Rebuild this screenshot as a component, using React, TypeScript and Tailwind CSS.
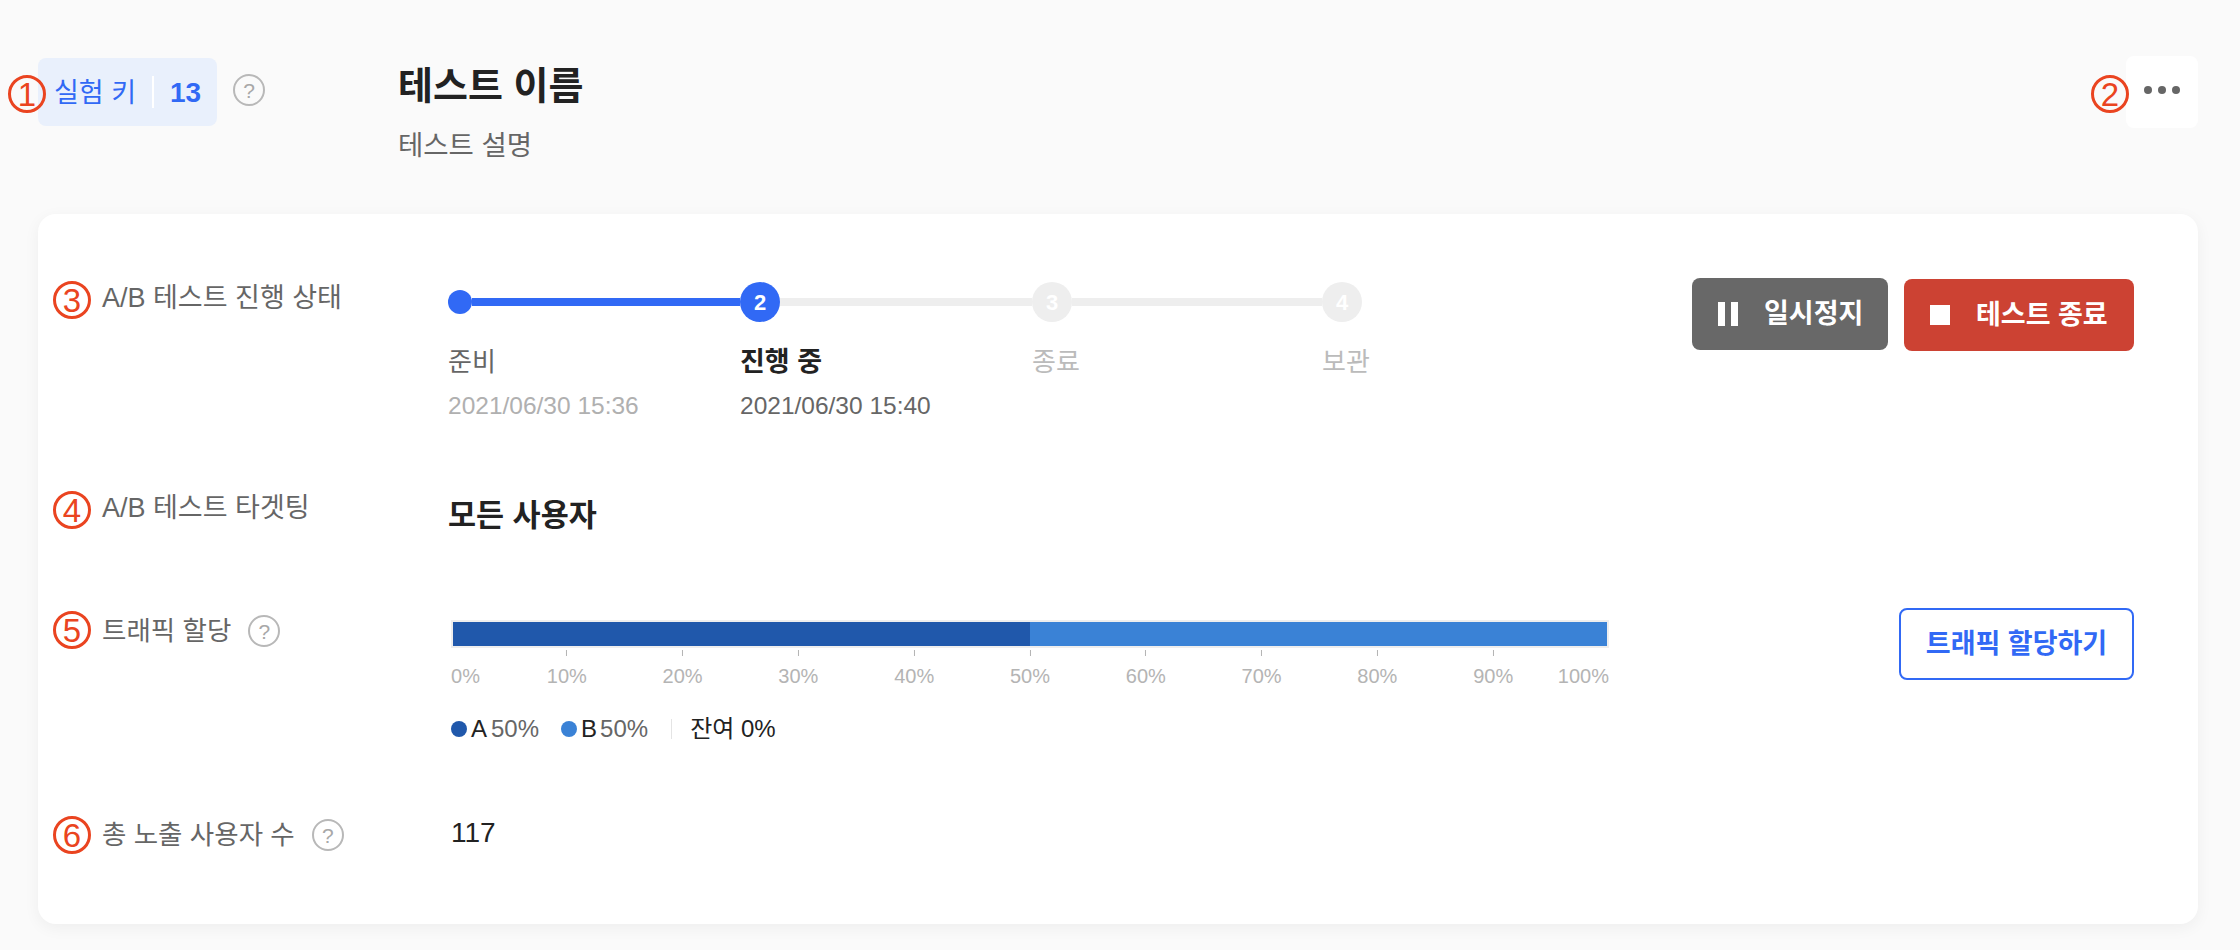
import React from "react";

function Num({ n, className }: { n: number; className: string }) {
  return (
    <span
      className={`absolute flex h-[38px] w-[38px] items-center justify-center rounded-full border-[3.5px] border-[#ea4420] text-[33px] leading-none text-[#ea4420] ${className}`}
    >
      {n}
    </span>
  );
}

function Help({ className = "" }: { className?: string }) {
  return (
    <span
      className={`flex h-[32px] w-[32px] shrink-0 items-center justify-center rounded-full border-2 border-[#b8b8b8] text-[21px] leading-none text-[#a8a8a8] ${className}`}
    >
      ?
    </span>
  );
}

function Label({ children, n, top, size = "text-[27px]" }: { children: React.ReactNode; n: number; top: string; size?: string }) {
  return (
    <div className={`relative flex h-[32px] items-center leading-[32px] text-[#666666] whitespace-nowrap ${size}`}>
      <Num n={n} className={`-left-[49px] ${top}`} />
      {children}
    </div>
  );
}

const steps = [
  { label: "준비", date: "2021/06/30 15:36" },
  { label: "진행 중", date: "2021/06/30 15:40" },
  { label: "종료", date: "" },
  { label: "보관", date: "" },
];

function Stepper() {
  return (
    <div className="flex">
      {steps.map((s, i) => (
        <div key={s.label} className={i === 3 ? "w-[60px]" : i === 2 ? "w-[290px]" : "w-[292px]"}>
          <div className="flex h-[40px] items-center">
            {i === 0 ? (
              <span className="h-[24px] w-[24px] shrink-0 rounded-full bg-[#3169f5]" />
            ) : (
              <span
                className={`flex h-[40px] w-[40px] shrink-0 items-center justify-center rounded-full text-[22px] font-bold text-white ${
                  i === 1 ? "bg-[#3169f5]" : "bg-[#eeeeee]"
                }`}
              >
                {i + 1}
              </span>
            )}
            {i < 3 && <span className={`h-[8px] flex-1 ${i === 0 ? "bg-[#3169f5]" : "bg-[#eeeeee]"}`} />}
          </div>
          <div
            className={`mt-[24px] h-[32px] leading-[32px] whitespace-nowrap ${
              i === 0
                ? "text-[26px] text-[#666666]"
                : i === 1
                  ? "text-[27px] font-bold text-[#222222]"
                  : "text-[26px] text-[#bbbbbb]"
            }`}
          >
            {s.label}
          </div>
          {s.date && (
            <div
              className={`mt-[12px] text-[24.5px] leading-[32px] whitespace-nowrap ${
                i === 0 ? "text-[#b0b0b0]" : "text-[#666666]"
              }`}
            >
              {s.date}
            </div>
          )}
        </div>
      ))}
    </div>
  );
}

const ticks = [0, 10, 20, 30, 40, 50, 60, 70, 80, 90, 100];

function Traffic() {
  return (
    <div className="mt-[6px] ml-[3px] w-[1158px]">
      <div className="flex h-[28px] border-2 border-[#eeeeee]">
        <div className="w-1/2 bg-[#2058ab]" />
        <div className="w-1/2 bg-[#3a82d6]" />
      </div>
      <div className="relative h-[37px] w-full">
        {ticks.map((t) => {
          const align = t === 0 ? "translateX(0)" : t === 100 ? "translateX(-100%)" : "translateX(-50%)";
          return (
            <div key={t} className="absolute top-[2px] flex flex-col items-center" style={{ left: `${t}%`, transform: align }}>
              <span className={`h-[6px] w-[1px] ${t === 0 || t === 100 ? "bg-transparent" : "bg-[#b4b4b4]"}`} />
              <span className="mt-[11px] text-[20px] leading-[18px] text-[#b4b4b4]">{t}%</span>
            </div>
          );
        })}
      </div>
      <div className="mt-[30px] flex h-[28px] items-center text-[24px] leading-[28px]">
        <span className="h-[16px] w-[16px] rounded-full bg-[#2058ab]" />
        <span className="ml-[4px] text-[#222222]">A</span>
        <span className="ml-[4px] text-[#666666]">50%</span>
        <span className="ml-[22px] h-[16px] w-[16px] rounded-full bg-[#3a82d6]" />
        <span className="ml-[4px] text-[#222222]">B</span>
        <span className="ml-[3px] text-[#666666]">50%</span>
        <span className="ml-[23px] h-[20px] w-[1px] bg-[#e4e4e4]" />
        <span className="ml-[18px] text-[#222222]">잔여 0%</span>
      </div>
    </div>
  );
}

export default function App() {
  return (
    <div className="h-[950px] w-full overflow-hidden bg-[#fafafa] pl-[38px] pr-[42px] pt-[56px] font-['Liberation_Sans','Noto_Sans_CJK_KR',sans-serif]">
      <header className="flex h-[158px] items-start">
        <div className="relative mt-[2px] flex h-[68px] w-[179px] items-center rounded-[8px] bg-[#e9f0fc] pl-[16px] text-[27px] leading-[32px] text-[#3169f5]">
          <Num n={1} className="-left-[30px] top-[17px]" />
          <span className="mt-[2px] w-[81px] whitespace-nowrap">실험 키</span>
          <span className="ml-[17px] h-[32px] w-[2px] bg-white" />
          <span className="ml-[16px] mt-[2px] text-[28px] font-bold">13</span>
        </div>
        <Help className="ml-[16px] mt-[18px]" />
        <div className="ml-[133px] mt-[8px]">
          <h1 className="text-[38px] font-bold leading-[44px] text-[#222222]">테스트 이름</h1>
          <p className="mt-[21px] text-[27.5px] leading-[34px] text-[#666666]">테스트 설명</p>
        </div>
        <button className="relative ml-auto flex h-[72px] w-[72px] items-center justify-center gap-[6px] rounded-[8px] bg-white pb-[4px]">
          <Num n={2} className="-left-[35px] top-[19px]" />
          <span className="h-[8px] w-[8px] rounded-full bg-[#666666]" />
          <span className="h-[8px] w-[8px] rounded-full bg-[#666666]" />
          <span className="h-[8px] w-[8px] rounded-full bg-[#666666]" />
        </button>
      </header>

      <main className="h-[710px] w-[2160px] rounded-[18px] bg-white px-[64px] pt-[68px] shadow-[0_4px_16px_rgba(0,0,0,0.05)]">
        <section className="flex h-[209px] items-start">
          <div className="w-[346px]">
            <Label n={3} top="top-[-1px]">A/B 테스트 진행 상태</Label>
          </div>
          <Stepper />
          <div className="-mt-[4px] ml-auto flex items-start gap-[16px]">
            <button className="flex h-[72px] w-[196px] items-center rounded-[8px] bg-[#686868] pl-[26px] text-[27px] font-bold text-white">
              <span className="h-[24px] w-[7px] bg-white" />
              <span className="ml-[6px] h-[24px] w-[7px] bg-white" />
              <span className="ml-[26px] whitespace-nowrap">일시정지</span>
            </button>
            <button className="mt-[1px] flex h-[72px] w-[230px] items-center rounded-[8px] bg-[#cc4233] pl-[26px] text-[27px] font-bold text-white">
              <span className="h-[20px] w-[20px] bg-white" />
              <span className="ml-[26px] whitespace-nowrap">테스트 종료</span>
            </button>
          </div>
        </section>

        <section className="flex h-[123px] items-start">
          <div className="mt-[1px] w-[346px]">
            <Label n={4} top="top-[-1px]">A/B 테스트 타겟팅</Label>
          </div>
          <div className="mt-[4px] text-[30.5px] font-bold leading-[40px] text-[#222222]">모든 사용자</div>
        </section>

        <section className="flex h-[205px] items-start">
          <div className="mt-[1px] w-[346px]">
            <Label n={5} top="top-[-4px]" size="text-[26.5px]">
              트래픽 할당
              <Help className="ml-[17px]" />
            </Label>
          </div>
          <Traffic />
          <button className="-mt-[6px] ml-auto h-[72px] w-[235px] rounded-[8px] border-2 border-[#3169f5] bg-white text-[27px] font-bold text-[#3169f5]">
            트래픽 할당하기
          </button>
        </section>

        <section className="flex items-start">
          <div className="w-[346px]">
            <Label n={6} top="top-[-3px]" size="text-[26.5px]">
              총 노출 사용자 수
              <Help className="ml-[17px]" />
            </Label>
          </div>
          <div className="-mt-[2px] ml-[3px] text-[28px] leading-[32px] text-[#222222]">117</div>
        </section>
      </main>
    </div>
  );
}
